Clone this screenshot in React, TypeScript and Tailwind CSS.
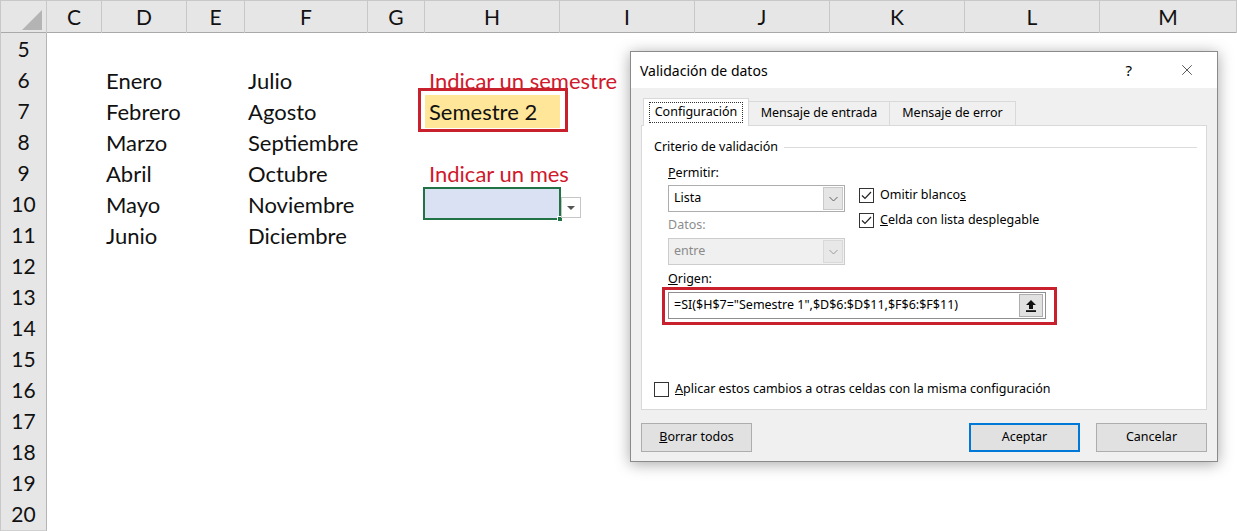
import { X } from 'lucide-react';

const rowGrid =
  'grid grid-cols-[47px_55px_85px_58px_123px_57px_135px_135px_135px_135px_135px_137px]';

const colLetters = ['C', 'D', 'E', 'F', 'G', 'H', 'I', 'J', 'K', 'L', 'M'];
const rowNumbers = [5, 6, 7, 8, 9, 10, 11, 12, 13, 14, 15, 16, 17, 18, 19, 20];

const months: Record<number, [string, string]> = {
  6: ['Enero', 'Julio'],
  7: ['Febrero', 'Agosto'],
  8: ['Marzo', 'Septiembre'],
  9: ['Abril', 'Octubre'],
  10: ['Mayo', 'Noviembre'],
  11: ['Junio', 'Diciembre'],
};

function Chevron({ color = '#606060' }: { color?: string }) {
  return (
    <svg width="9" height="6" viewBox="0 0 9 6">
      <path d="M0.5 1 L4.5 5 L8.5 1" fill="none" stroke={color} strokeWidth="1" />
    </svg>
  );
}

function Check() {
  return (
    <svg width="11" height="9" viewBox="0 0 11 9">
      <path d="M1 4.5 L4 7.5 L10 1" fill="none" stroke="#222" strokeWidth="1.2" />
    </svg>
  );
}

function Checkbox({ checked }: { checked?: boolean }) {
  return (
    <span className="w-[15px] h-[15px] border border-[#333] bg-white flex items-center justify-center shrink-0">
      {checked && <Check />}
    </span>
  );
}

function HCell({ row }: { row: number }) {
  if (row === 6)
    return (
      <div className="pl-[4px] whitespace-nowrap text-[#d0192c] flex items-center h-full">
        Indicar un semestre
      </div>
    );
  if (row === 9)
    return (
      <div className="pl-[4px] whitespace-nowrap text-[#d0192c] flex items-center h-full">
        Indicar un mes
      </div>
    );
  if (row === 7)
    return (
      <div className="relative h-full">
        <div className="h-full bg-[#ffe699] pl-[4px] flex items-center">Semestre 2</div>
        <div className="absolute -left-[7px] -top-[7px] w-[150px] h-[44px] border-[3px] border-[#c8202d]" />
      </div>
    );
  if (row === 10)
    return (
      <div className="relative h-full">
        <div className="absolute -left-[2px] -top-[1px] w-[138px] h-[33px] border-2 border-[#217346] bg-[#d9e1f2]" />
        <div className="absolute left-[132px] top-[28px] w-[6px] h-[6px] bg-[#217346] border border-white" />
        <div className="absolute left-[136px] top-[9px] w-[20px] h-[21px] border border-[#c6c6c6] bg-white flex items-center justify-center">
          <span className="w-0 h-0 border-l-[4px] border-r-[4px] border-t-[4px] border-l-transparent border-r-transparent border-t-[#555]" />
        </div>
      </div>
    );
  return null;
}

function Sheet() {
  return (
    <div className="w-[1237px] h-[531px] bg-white font-[Lato,sans-serif] text-[22px] text-[#111] overflow-hidden">
      <div className={`${rowGrid} h-[33px] bg-[#e6e6e6] border-t border-[#c8c8c8] border-b border-b-[#a9a9a9] text-[21px]`}>
        <div className="relative border-r border-[#c8c8c8] border-l">
          <svg className="absolute left-0 top-0" width="46" height="32" viewBox="0 0 46 32">
            <polygon points="41,9 41,29 21,29" fill="#b4b4b4" />
          </svg>
        </div>
        {colLetters.map((c) => (
          <div key={c} className="flex items-center justify-center border-r border-[#c8c8c8]">
            {c}
          </div>
        ))}
      </div>
      {rowNumbers.map((r) => (
        <div key={r} className={`${rowGrid} h-[31px]`}>
          <div className="bg-[#e6e6e6] border-l border-[#c8c8c8] border-r border-r-[#b5b5b5] border-b border-b-[#cfcfcf] flex items-center justify-center text-[21px]">
            {r}
          </div>
          <div />
          <div className="pl-[4px] flex items-center whitespace-nowrap">{months[r]?.[0]}</div>
          <div />
          <div className="pl-[3px] flex items-center whitespace-nowrap">{months[r]?.[1]}</div>
          <div />
          <div className="h-full">
            <HCell row={r} />
          </div>
          <div />
          <div />
          <div />
          <div />
          <div />
        </div>
      ))}
    </div>
  );
}

function Select({ value, disabled }: { value: string; disabled?: boolean }) {
  return (
    <div
      className={`w-[177px] h-[27px] border flex items-stretch ${
        disabled ? 'border-[#cccccc] bg-[#f0f0f0] text-[#8a8a8a]' : 'border-[#adadad] bg-white'
      }`}
    >
      <span className="flex-1 pl-[5px] flex items-center">{value}</span>
      <span
        className={`w-[20px] m-[1px] border flex items-center justify-center ${
          disabled ? 'border-[#d9d9d9] bg-[#e8e8e8]' : 'border-[#c9c9c9] bg-[#e5e5e5]'
        }`}
      >
        <Chevron color={disabled ? '#9a9a9a' : '#606060'} />
      </span>
    </div>
  );
}

function Button({ children, primary }: { children: React.ReactNode; primary?: boolean }) {
  return (
    <button
      className={`w-[111px] h-[29px] bg-[#e1e1e1] flex items-center justify-center ${
        primary ? 'border-2 border-[#0078d7]' : 'border border-[#adadad]'
      }`}
    >
      {children}
    </button>
  );
}

function Dialog() {
  return (
    <div className="absolute left-[630px] top-[51px] w-[588px] h-[411px] border border-[#8a8a8a] bg-[#f0f0f0] shadow-[0_2px_14px_rgba(0,0,0,0.35)] flex flex-col font-['Noto_Sans',sans-serif] text-[12.5px] text-black">
      <div className="h-[36px] bg-white flex items-center pl-[9px] pr-[21px] shrink-0">
        <span className="text-[14px] flex-1">Validación de datos</span>
        <span className="text-[15px] mr-[46px]">?</span>
        <X size={18} strokeWidth={1} color="#222" />
      </div>
      <div className="flex-1 flex flex-col px-[10px] pt-[10px] pb-[9px]">
        <div className="h-[27px] flex items-end shrink-0">
          <div className="ml-[2px] w-[106px] h-[28px] bg-white border border-b-0 border-[#d9d9d9] flex items-center justify-center relative z-10 -mb-px">
            <span className="border border-dotted border-[#333] px-[5px] h-[21px] flex items-center">Configuración</span>
          </div>
          <div className="w-[141px] h-[24px] border border-b-0 border-l-0 border-[#d9d9d9] flex items-center justify-center">
            Mensaje de entrada
          </div>
          <div className="w-[126px] h-[24px] border border-b-0 border-l-0 border-[#d9d9d9] flex items-center justify-center">
            Mensaje de error
          </div>
        </div>
        <div className="h-[285px] bg-white border border-[#d9d9d9] shrink-0 flex flex-col pl-[12px] pr-[9px]">
          <div className="mt-[13px] h-[17px] flex items-center gap-[6px]">
            <span>Criterio de validación</span>
            <span className="flex-1 h-px bg-[#dcdcdc]" />
          </div>
          <div className="pl-[14px] flex">
            <div className="flex flex-col">
              <div className="mt-[9px] h-[17px] flex items-center">
                <span><span className="underline">P</span>ermitir:</span>
              </div>
              <div className="mt-[3px]">
                <Select value="Lista" />
              </div>
              <div className="mt-[5px] h-[17px] flex items-center text-[#8d8d8d]">Datos:</div>
              <div className="mt-[4px]">
                <Select value="entre" disabled />
              </div>
            </div>
            <div className="ml-[14px] pt-[32px] flex flex-col gap-[10px]">
              <div className="h-[15px] flex items-center gap-[6px]">
                <Checkbox checked />
                <span>Omitir blanco<span className="underline">s</span></span>
              </div>
              <div className="h-[15px] flex items-center gap-[6px]">
                <Checkbox checked />
                <span><span className="underline">C</span>elda con lista desplegable</span>
              </div>
            </div>
          </div>
          <div className="pl-[14px]">
            <div className="mt-[6px] h-[17px] flex items-center">
              <span><span className="underline">O</span>rigen:</span>
            </div>
            <div className="mt-[4px] relative w-[378px] h-[27px] border border-[#8f8f8f] bg-white flex items-center">
              <span className="flex-1 pl-[5px] whitespace-nowrap">=SI($H$7="Semestre 1",$D$6:$D$11,$F$6:$F$11)</span>
              <span className="w-[24px] h-[23px] mr-[2px] bg-[#e1e1e1] border border-[#adadad] flex items-center justify-center">
                <svg width="10" height="12" viewBox="0 0 10 12">
                  <polygon points="5,0 10,5 7,5 7,9 3,9 3,5 0,5" fill="#111" />
                  <rect x="0" y="10.2" width="10" height="1.8" fill="#111" />
                </svg>
              </span>
              <div className="absolute -left-[7px] -top-[6px] w-[395px] h-[38px] border-[3px] border-[#c8202d]" />
            </div>
          </div>
          <div className="mt-[62px] h-[16px] flex items-center gap-[6px]">
            <Checkbox />
            <span><span className="underline">A</span>plicar estos cambios a otras celdas con la misma configuración</span>
          </div>
        </div>
        <div className="mt-[13px] flex items-center">
          <Button><span><span className="underline">B</span>orrar todos</span></Button>
          <div className="flex-1" />
          <Button primary>Aceptar</Button>
          <div className="w-[16px]" />
          <Button>Cancelar</Button>
        </div>
      </div>
    </div>
  );
}

export default function App() {
  return (
    <div className="relative w-[1237px] h-[531px] overflow-hidden">
      <Sheet />
      <Dialog />
    </div>
  );
}
